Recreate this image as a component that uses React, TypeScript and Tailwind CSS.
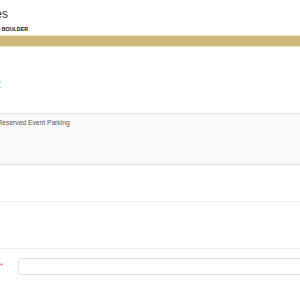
export default function App() {
  return (
    <div className="w-[300px] h-[300px] overflow-hidden bg-white font-['Liberation_Sans',Arial,sans-serif]">
      <div className="pt-[8px]">
        <div className="w-[8px] flex justify-end whitespace-nowrap text-[12px] leading-[12px] text-[#333]">
          <span>Parking Services</span>
        </div>
        <div className="mt-[6px] w-[28px] flex justify-end whitespace-nowrap text-[5.3px] leading-[6px] font-bold text-[#111]">
          <span>UNIVERSITY OF COLORADO BOULDER</span>
        </div>
      </div>
      <div className="mt-[3px] h-[12px] border-y border-[#ece2c4] bg-[#cfb87c]" />
      <div className="mt-[28.5px] w-[1.5px] flex justify-end whitespace-nowrap text-[13px] leading-[16px] text-[#444]">
        <span>Parking Permit:</span>
      </div>
      <div className="mt-[21px] h-[52px] border-y border-[#e0e0e0] bg-[#f9f9f9] pt-[5px]">
        <div className="-ml-[2.5px] whitespace-nowrap text-[6.7px] leading-[8px] text-[#555]">
          Reserved Event Parking
        </div>
      </div>
      <div className="mt-[36px] h-px bg-[#f1f1f1]" />
      <div className="mt-[46px] h-px bg-[#f1f1f1]" />
      <div className="mt-[9px] flex items-center">
        <div className="w-[3px] flex justify-end whitespace-nowrap text-[8px] leading-[10px] text-[#333]">
          <span>
            Email <span className="text-[#e85555]">*</span>
          </span>
        </div>
        <div className="ml-[15px] h-[17px] w-[300px] shrink-0 rounded-[2px] border border-[#e2e2e2] bg-white" />
      </div>
    </div>
  );
}
